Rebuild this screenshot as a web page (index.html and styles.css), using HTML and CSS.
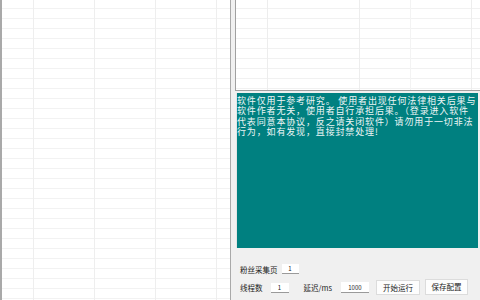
FILE: index.html
```html
<!DOCTYPE html>
<html lang="zh-CN">
<head>
    <meta charset="UTF-8">
    <title>粉丝采集</title>
    <link rel="stylesheet" href="styles.css">
</head>
<body>
    <!-- Tabella dati a sinistra -->
    <div class="sheet"></div>
    <div class="splitter"></div>

    <div class="side">
        <div class="result-table"></div>

        <div class="notice">
            <div>软件仅用于参考研究。 使用者出现任何法律相关后果与</div>
            <div>软件作者无关，使用者自行承担后果。（登录进入软件</div>
            <div>代表同意本协议，反之请关闭软件）请勿用于一切非法</div>
            <div>行为，如有发现，直接封禁处理!</div>
        </div>

        <div class="controls">
            <div class="row">
                <span class="label">粉丝采集页</span>
                <input class="field field-page" type="text" value="1">
            </div>
            <div class="row">
                <span class="label">线程数</span>
                <input class="field field-threads" type="text" value="1">
                <span class="label label-delay">延迟/ms</span>
                <input class="field field-delay" type="text" value="1000">
                <button class="btn btn-start">开始运行</button>
                <button class="btn btn-save">保存配置</button>
            </div>
        </div>
    </div>
</body>
</html>
```

FILE: styles.css
```css
/* Impostazioni generali */
body {
    margin: 0;
    width: 480px;
    height: 300px;
    overflow: hidden;
    display: flex;
    background-color: #f0f0f0;
    font-family: "Noto Sans CJK SC", "Noto Sans", sans-serif;
    color: #333;
}

/* Griglia a sinistra */
.sheet {
    box-sizing: border-box;
    width: 231px;
    height: 300px;
    border-left: 2px solid #a9a9a9;
    border-right: 1px solid #a9a9a9;
    background-color: #fff;
    background-image:
        linear-gradient(90deg, #eeeeee 1px, transparent 1px),
        linear-gradient(#f2f2f2 1px, transparent 1px);
    background-size: 61px 100%, 100% 10px;
    background-position: 31px 0, 0 8px;
}

.splitter {
    width: 4px;
}

.side {
    width: 245px;
    display: flex;
    flex-direction: column;
}

.result-table {
    box-sizing: border-box;
    height: 91px;
    border-left: 1px solid #a0a0a0;
    border-bottom: 1px solid #a0a0a0;
    background-color: #fff;
    background-image:
        linear-gradient(90deg, transparent 31px, #ededed 31px, #ededed 32px, transparent 32px,
            transparent 123px, #ededed 123px, #ededed 124px, transparent 124px,
            transparent 174px, #f3f3f3 174px, #f3f3f3 175px, transparent 175px,
            transparent 235px, #ededed 235px, #ededed 236px, transparent 236px),
        linear-gradient(#f1f1f1 1px, transparent 1px);
    background-size: 100% 100%, 100% 10px;
    background-position: 0 0, 0 8px;
}

/* Avviso su sfondo verde acqua */
.notice {
    box-sizing: border-box;
    height: 155px;
    margin: 2px 2px 0 2px;
    padding-top: 3px;
    background-color: #008080;
    box-shadow: -1px 0 0 #e4e4e4;
    color: #eef6f6;
    font-size: 9px;
    line-height: 10.3px;
    letter-spacing: 0.85px;
    white-space: nowrap;
    overflow: hidden;
}

/* Controlli in basso */
.controls {
    display: flex;
    flex-direction: column;
    padding: 15px 0 0 5px;
}

.row {
    display: flex;
    align-items: center;
    height: 12px;
}

.row + .row {
    margin-top: 4px;
    height: 17px;
}

.label {
    font-size: 7.5px;
    color: #222;
}

.field {
    box-sizing: border-box;
    height: 10px;
    padding: 0;
    border: none;
    border-bottom: 1px solid #9a9a9a;
    background-color: #fff;
    font-family: inherit;
    font-size: 6px;
    text-align: center;
    color: #222;
}

.field-page {
    width: 17px;
    margin-left: 4px;
}

.field-threads {
    width: 18px;
    margin-left: 8px;
}

.label-delay {
    margin-left: 15px;
}

.field-delay {
    width: 28px;
    height: 11px;
    margin-left: 9px;
}

.btn {
    box-sizing: border-box;
    height: 15px;
    padding: 0;
    border: 1px solid #dcdcdc;
    background-color: #fdfdfd;
    font-family: inherit;
    font-size: 7.5px;
    color: #222;
}

.btn-start {
    width: 44px;
    margin-left: 7px;
}

.btn-save {
    width: 43px;
    height: 16px;
    margin-left: 5px;
    margin-top: -2px;
}
```
